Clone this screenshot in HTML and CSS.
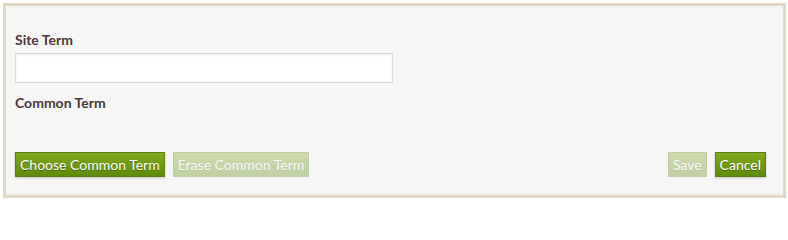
FILE: index.html
```html
<!DOCTYPE html>
<html>
<head>
<meta charset="utf-8">
<link rel="stylesheet" href="styles.css">
</head>
<body>
<div class="panel">
  <div class="field">
    <label class="label">Site Term</label>
    <input class="input" type="text">
  </div>
  <div class="field">
    <label class="label">Common Term</label>
  </div>
  <div class="actions">
    <div class="group">
      <button class="btn">Choose Common Term</button>
      <button class="btn disabled">Erase Common Term</button>
    </div>
    <div class="group">
      <button class="btn disabled">Save</button>
      <button class="btn">Cancel</button>
    </div>
  </div>
</div>
</body>
</html>
```
FILE: styles.css
```css
html, body {
  margin: 0;
  padding: 0;
  background: #ffffff;
}
body {
  font-family: Lato, "Open Sans", sans-serif;
  padding: 3px 2px 4px 3px;
}
.panel {
  border: 3px solid #e0d8c2;
  background: #f6f6f6;
  box-shadow: inset 0 -2px 2px rgba(0,0,0,0.04);
  padding: 25px 17px 18px 9px;
  height: 146px;
  display: flex;
  flex-direction: column;
}
.field {
  display: flex;
  flex-direction: column;
}
.label {
  font-weight: bold;
  font-size: 14px;
  color: #4b3838;
  line-height: 18px;
}
.input {
  margin-top: 4px;
  margin-bottom: 11px;
  width: 378px;
  height: 30px;
  box-sizing: border-box;
  border: 1px solid #d8d8d8;
  background: #fff;
  box-shadow: inset 0 1px 3px rgba(0,0,0,0.1);
  padding: 0 6px;
  outline: none;
}
.actions {
  margin-top: auto;
  display: flex;
  justify-content: space-between;
}
.group {
  display: flex;
  gap: 8px;
}
.btn {
  height: 25px;
  box-sizing: border-box;
  border: 1px solid #5b7f0e;
  background: linear-gradient(#83aa1d, #5e8b0b);
  color: #fff;
  font-family: Lato, "Open Sans", sans-serif;
  font-size: 14px;
  padding: 0 4px;
  text-shadow: 0 1px 1px rgba(0,0,0,0.35);
  box-shadow: 0 1px 2px rgba(0,0,0,0.2);
  cursor: pointer;
}
.btn.disabled {
  opacity: 0.35;
  box-shadow: none;
}
```
